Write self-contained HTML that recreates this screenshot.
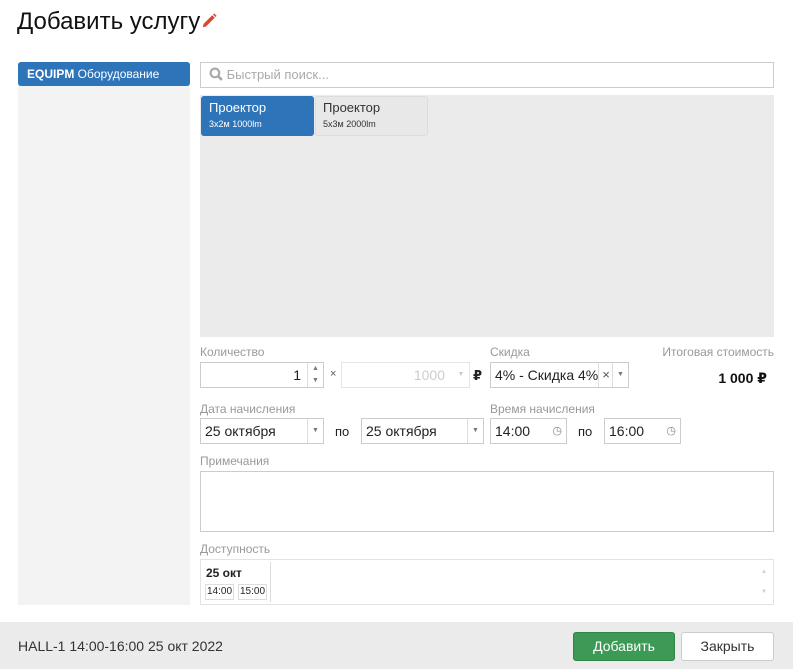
<!DOCTYPE html><html><head><meta charset="utf-8"><style>
*{box-sizing:border-box}body{margin:0;width:793px;height:669px;background:#fff;font-family:"Liberation Sans","DejaVu Sans",sans-serif;position:relative;overflow:hidden;color:#222}
.a{position:absolute}
.lbl{position:absolute;font-size:12px;color:#999}
.inp{position:absolute;border:1px solid #ccc;background:#fff;font-size:14px;color:#222;line-height:24px;padding-left:4px}
.arr{position:absolute;right:0;top:0;width:16px;height:100%;border-left:1px solid #ddd;font-size:7px;color:#777;text-align:center}
</style></head><body>
<div class="a" style="left:17px;top:8px;font-size:24px;color:#111">Добавить услугу<svg width="16" height="16" viewBox="0 0 14 14" style="margin-left:1px"><path d="M1.5 12.5l.8-3 7.5-7.5 2.2 2.2-7.5 7.5z" fill="#e2432f"/><path d="M10.5 1.3l1-1 2.2 2.2-1 1z" fill="#e2432f"/></svg></div>
<div class="a" style="left:18px;top:62px;width:172px;height:543px;background:#f3f3f3"></div>
<div class="a" style="left:18px;top:62px;width:172px;height:24px;background:#2d74b8;border-radius:3px;color:#fff;font-size:12px;line-height:24px;padding-left:9px"><b>EQUIPM</b> Оборудование</div>
<div class="inp" style="left:200px;top:62px;width:574px;height:26px;color:#aaa;font-size:13px;padding-left:8px"><svg width="14" height="14" viewBox="0 0 13 13" style="vertical-align:-2px"><circle cx="5.5" cy="5.5" r="4" stroke="#aaa" stroke-width="2" fill="none"/><path d="M8.5 8.5l3.5 3.5" stroke="#aaa" stroke-width="2.5"/></svg> Быстрый поиск...</div>
<div class="a" style="left:200px;top:95px;width:574px;height:242px;background:#ebebeb"></div>
<div class="a" style="left:201px;top:96px;width:113px;height:40px;background:#2d74b8;border-radius:3px;color:#fff;padding:4px 8px;font-size:13px;line-height:15px">Проектор<br><span style="font-size:9px">3x2м 1000lm</span></div>
<div class="a" style="left:315px;top:96px;width:113px;height:40px;background:#e8e8e8;border:1px solid #ddd;border-radius:3px;color:#333;padding:3px 7px;font-size:13px;line-height:15px">Проектор<br><span style="font-size:9px">5x3м 2000lm</span></div>
<div class="lbl" style="left:200px;top:345px">Количество</div>
<div class="inp" style="left:200px;top:362px;width:124px;height:26px;text-align:right;padding-right:22px">1<div class="arr" style="line-height:12px">▲<br>▼</div></div>
<div class="a" style="left:330px;top:368px;font-size:11px;color:#555">×</div>
<div class="inp" style="left:341px;top:362px;width:129px;height:26px;border-color:#e5e5e5;color:#ccc;text-align:right;padding-right:24px">1000<div class="arr" style="border:none;color:#ccc;line-height:24px">▼</div></div>
<div class="a" style="left:473px;top:368px;font-size:13px;font-weight:bold">₽</div>
<div class="lbl" style="left:490px;top:345px">Скидка</div>
<div class="inp" style="left:490px;top:362px;width:139px;height:26px">4% - Скидка 4%<div class="a" style="left:107px;top:0;width:15px;height:24px;border-left:1px solid #ddd;text-align:center;font-size:13px;color:#555">×</div><div class="arr" style="line-height:24px">▼</div></div>
<div class="lbl" style="right:19px;top:345px">Итоговая стоимость</div>
<div class="a" style="right:26px;top:370px;font-size:14px;font-weight:bold;color:#111">1 000 ₽</div>
<div class="lbl" style="left:200px;top:402px">Дата начисления</div>
<div class="inp" style="left:200px;top:418px;width:124px;height:26px">25 октября<div class="arr" style="line-height:24px">▼</div></div>
<div class="a" style="left:335px;top:424px;font-size:13px">по</div>
<div class="inp" style="left:361px;top:418px;width:123px;height:26px">25 октября<div class="arr" style="line-height:24px">▼</div></div>
<div class="lbl" style="left:490px;top:402px">Время начисления</div>
<div class="inp" style="left:490px;top:418px;width:77px;height:26px">14:00<span class="a" style="right:4px;top:0;font-size:11px;color:#888">◷</span></div>
<div class="a" style="left:578px;top:424px;font-size:13px">по</div>
<div class="inp" style="left:604px;top:418px;width:77px;height:26px">16:00<span class="a" style="right:4px;top:0;font-size:11px;color:#888">◷</span></div>
<div class="lbl" style="left:200px;top:454px">Примечания</div>
<div class="inp" style="left:200px;top:471px;width:574px;height:61px"></div>
<div class="lbl" style="left:200px;top:542px">Доступность</div>
<div class="inp" style="left:200px;top:559px;width:574px;height:46px;border-color:#e3e3e3">
<div class="a" style="left:5px;top:6px;font-size:12px;font-weight:bold;line-height:14px">25 окт</div>
<div class="a" style="left:69px;top:2px;width:1px;height:40px;background:#ddd"></div>
<div class="a" style="left:4px;top:24px;font-size:10px;line-height:14px;border:1px solid #ddd;padding:0 1px">14:00</div>
<div class="a" style="left:37px;top:24px;font-size:10px;line-height:14px;border:1px solid #ddd;padding:0 1px">15:00</div>
<div class="a" style="right:6px;top:0;font-size:6px;color:#ccc">▲</div><div class="a" style="right:6px;bottom:0;font-size:6px;color:#ccc">▼</div></div>
<div class="a" style="left:0;top:622px;width:793px;height:47px;background:#ebebeb"></div>
<div class="a" style="left:18px;top:638px;font-size:14px;color:#333">HALL-1 14:00-16:00 25 окт 2022</div>
<div class="a" style="left:573px;top:632px;width:102px;height:29px;background:#3d9a56;border:1px solid #2f8548;border-radius:3px;color:#fff;font-size:14px;text-align:center;line-height:27px">Добавить</div>
<div class="a" style="left:681px;top:632px;width:93px;height:29px;background:#fff;border:1px solid #ccc;border-radius:3px;color:#333;font-size:14px;text-align:center;line-height:27px">Закрыть</div>
</body></html>
